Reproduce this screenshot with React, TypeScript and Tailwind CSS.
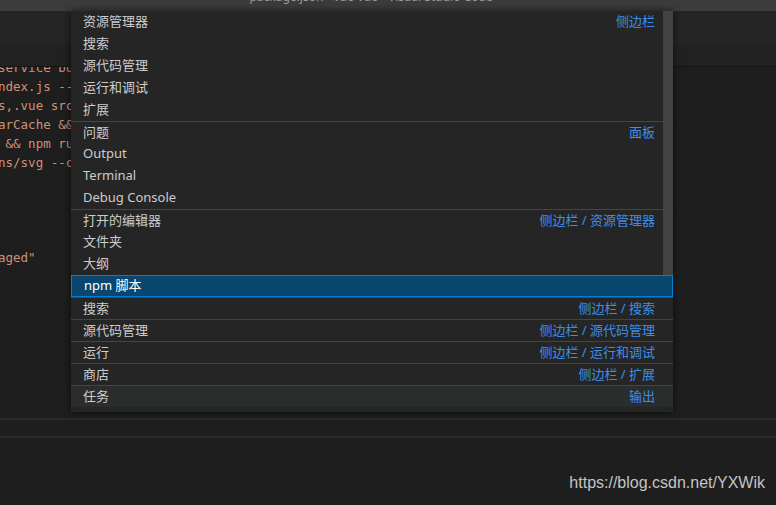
import React from 'react';

type Item = {
  label: string;
  right?: string;
  sep?: boolean;
  selected?: boolean;
  hover?: boolean;
};

const items: Item[] = [
  { label: '资源管理器', right: '侧边栏' },
  { label: '搜索' },
  { label: '源代码管理' },
  { label: '运行和调试' },
  { label: '扩展' },
  { label: '问题', right: '面板', sep: true },
  { label: 'Output' },
  { label: 'Terminal' },
  { label: 'Debug Console' },
  { label: '打开的编辑器', right: '侧边栏 / 资源管理器', sep: true },
  { label: '文件夹' },
  { label: '大纲' },
  { label: 'npm 脚本', selected: true },
  { label: '搜索', right: '侧边栏 / 搜索', sep: true },
  { label: '源代码管理', right: '侧边栏 / 源代码管理', sep: true },
  { label: '运行', right: '侧边栏 / 运行和调试', sep: true },
  { label: '商店', right: '侧边栏 / 扩展', sep: true },
  { label: '任务', right: '输出', sep: true, hover: true },
];

// what's left of the editor text behind the menu
const code = [
  'service bu',
  'ndex.js --',
  's,.vue src',
  'arCache &&',
  ' && npm ru',
  'ns/svg --c',
  '',
  '',
  '',
  '',
  'aged"',
];

const uiFont = { fontFamily: '"Noto Sans", "Noto Sans CJK SC", sans-serif' };

const Row = ({ item }: { item: Item }) => {
  let cls = 'flex items-center justify-between h-[22px] pl-[12px] pr-[18px] text-[13px] ';
  if (item.selected) cls += 'bg-[#094771] border border-[#007fd4] text-white pl-[11px] pr-[17px]';
  else if (item.hover) cls += 'bg-[#2a2d2e] text-[#cccccc]';
  else cls += 'text-[#cccccc]';
  if (item.sep) cls += ' border-t border-[#454545]';
  return (
    <div className={cls}>
      <span>{item.label}</span>
      {item.right && <span className="text-[#3b8eea]">{item.right}</span>}
    </div>
  );
};

export default function App() {
  return (
    <div className="relative w-[776px] h-[505px] overflow-hidden bg-[#1e1e1e]" style={uiFont}>
      {/* title bar, mostly cut off */}
      <div className="h-[11px] overflow-hidden bg-[#3c3c3c] flex justify-center pr-[34px]">
        <span className="text-[12px] leading-[14px] -mt-[10px] text-[#9a9a9a]">
          package.json - vue-vue - Visual Studio Code
        </span>
      </div>
      {/* tabs */}
      <div className="h-[34px] bg-[#252526]" />
      {/* breadcrumbs */}
      <div className="h-[22px] bg-[#212121] border-b border-[#161616]" />
      {/* editor */}
      <div
        className="h-[351px] overflow-hidden text-[#ce9178] text-[12.5px] leading-[19px] whitespace-pre"
        style={{ fontFamily: '"DejaVu Sans Mono", "Liberation Mono", monospace' }}
      >
        <div className="-mt-[9px] -ml-[2px]">
          {code.map((l, i) => (
            <div key={i} className="h-[19px]">
              {l}
            </div>
          ))}
        </div>
      </div>
      <div className="h-[2px] bg-[#2a2a2a]" />
      <div className="h-[16px]" />
      <div className="h-[2px] bg-[#2a2a2a]" />

      {/* quick pick menu */}
      <div className="absolute left-[71px] top-[11px] w-[602px] bg-[#252526] pb-[5px] shadow-[0_0_8px_rgba(0,0,0,0.6)]">
        {items.map((it, i) => (
          <Row key={i} item={it} />
        ))}
        <div className="absolute right-0 top-0 w-[10px] h-[264px] bg-[#464646]/90" />
      </div>

      <div className="absolute right-[11px] bottom-[10px] text-[16px] text-[#c4c4c4]" style={{ fontFamily: '"Liberation Sans", Arial, sans-serif' }}>
        https://blog.csdn.net/YXWik
      </div>
    </div>
  );
}
